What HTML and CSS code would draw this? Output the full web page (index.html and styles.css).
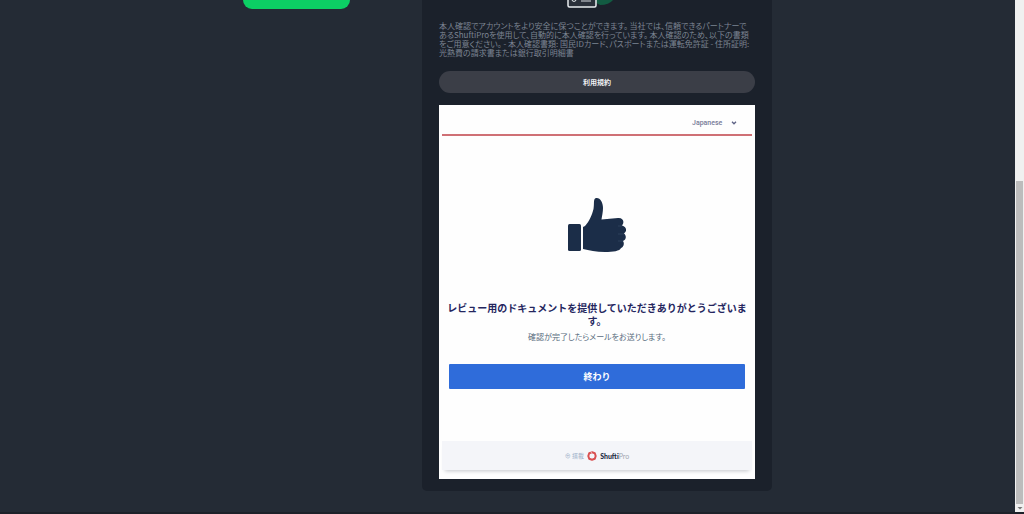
FILE: index.html
```html
<!DOCTYPE html>
<html lang="ja">
<head>
<meta charset="utf-8">
<meta name="viewport" content="width=device-width, initial-scale=1">
<title>本人確認</title>
<link rel="stylesheet" href="styles.css">
</head>
<body>
<div class="page">
  <main class="content">
    <div class="side">
      <button class="side-button" type="button" aria-label="続ける"></button>
    </div>
    <section class="card">
      <svg class="id-icon" viewBox="0 0 60 9" aria-hidden="true">
        <path d="M25 0H47Q43 5 34 5Z" fill="#125b42"/>
        <path d="M2 -8H30V5.500Q30 7 28.500 7H3.500Q2 7 2 5.500Z" fill="#2a303a" stroke="#e9edf0" stroke-width="1.500"/>
        <path d="M6 0Q8 3 10 0M15 1H25M18 -1H23" fill="none" stroke="#d5dade" stroke-width="1.200"/>
      </svg>
      <p class="intro">本人確認でアカウントをより安全に保つことができます。 当社では、信頼できるパートナーで<br>あるShuftiProを使用して、自動的に本人確認を行っています。 本人確認のため、以下の書類<br>をご用意ください。 - 本人確認書類: 国民IDカード、パスポートまたは運転免許証 - 住所証明:<br>光熱費の請求書または銀行取引明細書</p>
      <button class="terms" type="button">利用規約</button>
      <div class="frame">
        <header class="frame-head">
          <select class="language" aria-label="Language"><option>Japanese</option></select>
          <svg class="caret" viewBox="0 0 6 4" aria-hidden="true"><path d="M1 .8L3 2.800L5 .8" fill="none" stroke="#5c6184" stroke-width="1.300"/></svg>
        </header>
        <div class="result">
          <svg class="thumb" viewBox="0 0 60 56" aria-hidden="true">
            <rect x="1" y="27" width="13" height="27" rx="1.500" fill="#1b2d48"/>
            <path d="M16 30L18 29C22 25 25 18 26.500 12C27.500 7 26 1.500 29 1C33 .3 36 5 36 11C36 15 35 19 34.500 22.500L51 21C56 20.500 58 25 55 28.500C59.500 29.500 60.500 34 57 36.500C60 39 59 43 56 44C58 47 56 50.500 54 51C53 54 46 55 38 55C29 55 22 53.500 16 52Z" fill="#1b2d48"/>
            <path d="M51 29H55M51 37H57M51 44H56" stroke="#344966" stroke-width=".7"/>
          </svg>
          <h1 class="title">レビュー用のドキュメントを提供していただきありがとうございま<br>す。</h1>
          <p class="note">確認が完了したらメールをお送りします。</p>
          <button class="finish" type="button">終わり</button>
        </div>
        <footer class="frame-foot">
          <span class="powered">⊕ 搭載</span>
          <svg class="ring" viewBox="0 0 10 10" aria-hidden="true"><path d="M5 1.300L7.800 2.200L8.700 5L7.800 7.800L5 8.700L2.200 7.800L1.300 5L2.200 2.200Z" fill="none" stroke="#d94f50" stroke-width="2" stroke-linejoin="round"/><path d="M3.600 0L4.800 2.400" stroke="#f4f5f9" stroke-width=".6"/></svg>
          <span class="brand"><b>Shufti</b>Pro</span>
        </footer>
      </div>
    </section>
  </main>
  <div class="scrollbar">
    <div class="scroll-thumb"></div>
    <svg class="scroll-arrow" viewBox="0 0 8 8" aria-hidden="true"><path d="M1.500 3H6.500L4 5.500Z" fill="#777"/></svg>
  </div>
</div>
</body>
</html>
```
FILE: styles.css
```css
* {
  box-sizing: border-box;
}

body {
  margin: 0;
  background: #242b35;
  font-family: "Noto Sans CJK JP", sans-serif;
}

button,
select {
  border: 0;
  margin: 0;
  padding: 0;
  font-family: inherit;
}

.page {
  display: flex;
  min-height: 100vh;
  border-bottom: 2px solid #1d2129;
}

.content {
  flex: 1;
  display: flex;
  justify-content: center;
  align-items: flex-start;
  gap: 72px;
}

.side-button {
  display: block;
  width: 107px;
  height: 9px;
  border-radius: 0 0 12px 12px;
  background: #0ccf64;
}

.card {
  width: 350px;
  padding: 0 17px 12px;
  border-radius: 0 0 5px 5px;
  background: #1b212b;
}

.id-icon {
  display: block;
  width: 60px;
  height: 9px;
  margin: 0 0 12px 127px;
}

.intro {
  margin: 0 0 14px;
  color: #7b8492;
  font-size: 8px;
  font-feature-settings: "palt";
  line-height: 9px;
  white-space: nowrap;
}

.terms {
  display: block;
  width: 100%;
  height: 22px;
  border-radius: 11px;
  background: #3b3e47;
  color: #f0f1f3;
  font-size: 7px;
  font-weight: 700;
}

.frame {
  margin-top: 12px;
  padding: 0 3px 9px;
  background: #fefefe;
}

.frame-head {
  display: flex;
  align-items: center;
  justify-content: flex-end;
  gap: 8px;
  height: 31px;
  padding: 7px 15px 0 0;
  border-bottom: 2px solid #cf7075;
}

.language {
  appearance: none;
  background: transparent;
  color: #777b98;
  font-family: Roboto, sans-serif;
  font-size: 7px;
  font-weight: 500;
}

.caret {
  width: 6px;
  height: 4px;
}

.result {
  padding: 61px 0 52px;
  text-align: center;
}

.thumb {
  display: block;
  width: 60px;
  height: 56px;
  margin: 0 auto 48px;
}

.title {
  margin: 0;
  color: #25265e;
  font-size: 10px;
  font-weight: 700;
  line-height: 13px;
  white-space: nowrap;
}

.note {
  margin: 4px 0 21px;
  color: #586b7d;
  font-size: 8px;
  font-feature-settings: "palt";
  line-height: 12px;
}

.finish {
  display: block;
  width: calc(100% - 14px);
  height: 25px;
  margin: 0 auto;
  border-radius: 1px;
  background: #2f6cda;
  color: #fff;
  font-size: 9px;
  font-weight: 700;
}

.frame-foot {
  display: flex;
  align-items: center;
  justify-content: center;
  gap: 3px;
  height: 29px;
  background: #f4f5f9;
  box-shadow: 0 4px 4px -3px #c3c5ca;
}

.powered {
  color: #9db1c9;
  font-size: 6px;
}

.ring {
  width: 10px;
  height: 10px;
}

.brand {
  color: #a2a7b1;
  font-family: Lato, sans-serif;
  font-size: 7px;
}

.brand b {
  color: #222c43;
  font-weight: 900;
}

.scrollbar {
  display: flex;
  flex-direction: column;
  justify-content: flex-end;
  width: 9px;
  padding-left: 1px;
  background: #f0f0f0;
}

.scroll-thumb {
  width: 7px;
  height: 63%;
  background: #bcbcbc;
}

.scroll-arrow {
  width: 8px;
  height: 8px;
}
```
